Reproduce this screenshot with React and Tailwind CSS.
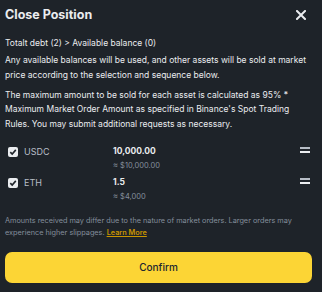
import React from "react";

function Check() {
  return (
    <div className="w-[10px] h-[10px] rounded-[2px] bg-[#eaecef] flex items-center justify-center">
      <svg width="8" height="8" viewBox="0 0 8 8">
        <path d="M1.3 4.1 L3.2 6 L6.8 1.9" fill="none" stroke="#1e2329" strokeWidth="1.6" />
      </svg>
    </div>
  );
}

function Handle() {
  return (
    <div className="flex flex-col gap-[2px] pt-[1px]">
      <div className="w-[10px] h-[2px] bg-[#b7bdc6]" />
      <div className="w-[10px] h-[2px] bg-[#eaecef]" />
    </div>
  );
}

function Row({ name, amount, usd }) {
  return (
    <div className="flex items-start h-[31px]">
      <div className="w-[18px] pl-[3px] pt-[2px]">
        <Check />
      </div>
      <div className="w-[90px] pl-[1px] text-[9px] leading-[13px] text-[#b7bdc6]">{name}</div>
      <div className="flex-1 flex flex-col">
        <div className="text-[8.5px] leading-[13px] font-bold text-[#eaecef]">{amount}</div>
        <div className="mt-[2px] text-[7.5px] leading-[12px] text-[#848e9c]">{usd}</div>
      </div>
      <div className="pr-[7px] pt-[1px]">
        <Handle />
      </div>
    </div>
  );
}

export default function App() {
  return (
    <div
      className="w-[322px] h-[292px] bg-[#1e2329] px-[5px] overflow-hidden"
      style={{ fontFamily: "Inter, 'Noto Sans', sans-serif" }}
    >
      <div className="flex items-center justify-between pt-[6px] h-[24px]">
        <div className="text-[12.5px] leading-[16px] font-bold text-[#eaecef]">Close Position</div>
        <svg width="10" height="10" viewBox="0 0 10 10" className="mr-[11px]">
          <path d="M1 1 L9 9 M9 1 L1 9" stroke="#eaecef" strokeWidth="2" strokeLinecap="square" />
        </svg>
      </div>
      <div className="mt-[12px] text-[8.5px] leading-[14px] text-[#eaecef]">
        Totalt debt (2) &gt; Available balance (0)
      </div>
      <div className="mt-[3px] text-[8.5px] leading-[15px] text-[#eaecef] whitespace-nowrap">
        Any available balances will be used, and other assets will be sold at market
        <br />
        price according to the selection and sequence below.
      </div>
      <div className="mt-[5px] text-[8.5px] leading-[14.3px] text-[#eaecef] whitespace-nowrap">
        The maximum amount to be sold for each asset is calculated as 95% *
        <br />
        Maximum Market Order Amount as specified in Binance's Spot Trading
        <br />
        Rules. You may submit additional requests as necessary.
      </div>
      <div className="mt-[14px] flex flex-col">
        <Row name="USDC" amount="10,000.00" usd="≈ $10,000.00" />
        <Row name="ETH" amount="1.5" usd="≈ $4,000" />
      </div>
      <div className="mt-[8px] text-[7.3px] leading-[12px] text-[#848e9c] whitespace-nowrap">
        Amounts received may differ due to the nature of market orders. Larger orders may
        <br />
        experience higher slippages.{" "}
        <span className="font-semibold text-[#c99400] underline">Learn More</span>
      </div>
      <button className="mt-[13px] w-[307px] h-[31px] rounded-[7px] bg-[#fcd535] text-[10px] font-medium text-[#202630] flex items-center justify-center">
        Confirm
      </button>
    </div>
  );
}
